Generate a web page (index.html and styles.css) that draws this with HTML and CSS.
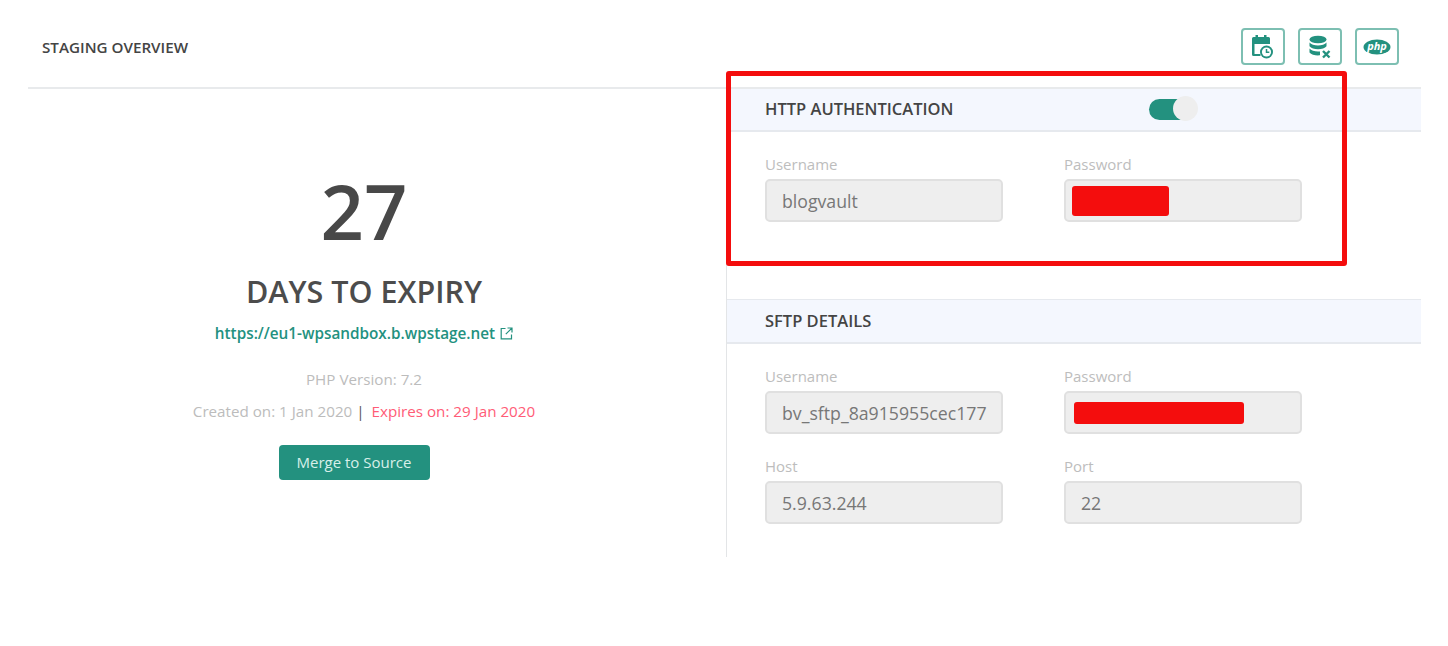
FILE: index.html
```html
<!DOCTYPE html>
<html lang="en">
<head>
  <meta charset="UTF-8" />
  <meta name="viewport" content="width=device-width, initial-scale=1.0"/>
  <title>Staging Overview</title>
  <link rel="stylesheet" href="styles.css">
</head>
<body>

  <div class="page">
    <div class="top-bar">
      <div class="page-title">STAGING OVERVIEW</div>
      <div class="icon-btns">
        <a class="icon-btn">
          <svg width="24" height="26" viewBox="0 0 24 26">
            <path fill="#23917f" d="M4.500 1h2.500v3H4.500zM13 1h2.500v3H13z"/>
            <path fill="#23917f" d="M2.500 3h15a1.500 1.500 0 0 1 1.500 1.500V10H3.500v10h6v2H2.500A1.500 1.500 0 0 1 1 20.500v-16A1.500 1.500 0 0 1 2.500 3z"/>
            <circle cx="15.500" cy="18" r="6.500" fill="#23917f"/>
            <circle cx="15.500" cy="18" r="4.600" fill="#fff"/>
            <path d="M15.500 15v3.300h2.800" fill="none" stroke="#23917f" stroke-width="1.500"/>
          </svg>
        </a>
        <a class="icon-btn">
          <svg width="24" height="24" viewBox="0 0 24 24">
            <ellipse cx="10" cy="4.500" rx="8.500" ry="3.800" fill="#23917f"/>
            <path fill="#23917f" d="M1.500 7.500c1.500 2 5 3 8.500 3s7-1 8.500-3v3.800c-1.500 2-5 3-8.500 3s-7-1-8.500-3zM1.500 13.500c1.500 2 5 3 8.500 3 .7 0 1.400 0 2-.1v3.900c-.6.1-1.300.1-2 .1-3.500 0-7-1-8.500-3z"/>
            <path d="M15 16l6.500 6.500M21.500 16L15 22.500" stroke="#23917f" stroke-width="2.400" fill="none"/>
          </svg>
        </a>
        <a class="icon-btn">
          <svg width="28" height="16" viewBox="0 0 28 16">
            <ellipse cx="14" cy="8" rx="13.500" ry="7.500" fill="#23917f"/>
            <text x="14" y="11" text-anchor="middle" class="php-text">php</text>
          </svg>
        </a>
      </div>
    </div>

    <div class="columns">
      <div class="left-col">
        <div class="days">27</div>
        <div class="days-label">DAYS TO EXPIRY</div>
        <a class="site-link">
          https://eu1-wpsandbox.b.wpstage.net
          <svg width="13" height="13" viewBox="0 0 13 13">
            <path d="M5.500 1.500H1.200v10.300h10.300V7.500M7.500 1H12v4.500M12 1L5.800 7.200" fill="none" stroke="#23917f" stroke-width="1.200"/>
          </svg>
        </a>
        <p class="meta php-version">PHP Version: 7.2</p>
        <p class="meta dates">Created on: 1 Jan 2020 <span class="sep">|</span> <span class="expires">Expires on: 29 Jan 2020</span></p>
        <button class="merge-btn">Merge to Source</button>
      </div>

      <div class="right-col">
        <div class="section http-section">
          <div class="section-head">
            <h4>HTTP AUTHENTICATION</h4>
            <div class="toggle"><span class="thumb"></span></div>
          </div>
          <div class="fields">
            <div class="field">
              <label>Username</label>
              <div class="input">blogvault</div>
            </div>
            <div class="field">
              <label>Password</label>
              <div class="input redacted"><span class="red-mark short"></span></div>
            </div>
          </div>
        </div>

        <div class="section sftp-section">
          <div class="section-head">
            <h4>SFTP DETAILS</h4>
          </div>
          <div class="fields">
            <div class="field">
              <label>Username</label>
              <div class="input">bv_sftp_8a915955cec177</div>
            </div>
            <div class="field">
              <label>Password</label>
              <div class="input redacted"><span class="red-mark long"></span></div>
            </div>
            <div class="field">
              <label>Host</label>
              <div class="input">5.9.63.244</div>
            </div>
            <div class="field">
              <label>Port</label>
              <div class="input">22</div>
            </div>
          </div>
        </div>
      </div>
    </div>

    <div class="highlight-box"></div>
  </div>

</body>
</html>
```

FILE: styles.css
```css
* {
  margin: 0;
  box-sizing: border-box;
}

body {
  font-family: 'Open Sans', sans-serif;
  background-color: #fff;
  color: #4a4a4a;
  height: 100vh;
  overflow: hidden;
}

.page {
  position: relative;
  margin-left: 28px;
  width: 1393px;
}

/* header */
.top-bar {
  display: flex;
  justify-content: space-between;
  align-items: center;
  height: 89px;
  padding: 16px 22px 10px 14px;
  border-bottom: 2px solid #e8eaec;
}

.page-title {
  font-size: 15.2px;
  font-weight: 600;
  color: #444;
}

.icon-btns {
  display: flex;
  gap: 13px;
}

.icon-btn {
  display: flex;
  justify-content: center;
  align-items: center;
  width: 44px;
  height: 37px;
  border: 2px solid #7dbfb2;
  border-radius: 4px;
}

.php-text {
  font-family: 'Open Sans', sans-serif;
  font-size: 11px;
  font-style: italic;
  font-weight: 700;
  fill: #fff;
}

.columns {
  display: flex;
}

/* left side */
.left-col {
  width: 698px;
  padding: 77px 26px 0 0;
  display: flex;
  flex-direction: column;
  align-items: center;
}

.days {
  font-size: 76px;
  font-weight: 600;
  line-height: 90px;
  color: #484848;
}

.days-label {
  margin-top: 15px;
  font-size: 30.5px;
  font-weight: 600;
  line-height: 40px;
  color: #4c4c4c;
}

.site-link {
  display: flex;
  align-items: center;
  gap: 5px;
  margin-top: 11px;
  font-size: 15.3px;
  font-weight: 600;
  line-height: 22px;
  color: #23917f;
}

.meta {
  font-size: 15.2px;
  line-height: 22px;
  color: #bcbcbc;
}

.php-version {
  margin-top: 24px;
}

.dates {
  margin-top: 10px;
}

.sep {
  color: #555;
}

.expires {
  margin-left: 3px;
  color: #ff5c77;
}

.merge-btn {
  width: 151px;
  height: 35px;
  margin: 23px 20px 0 0;
  padding-bottom: 3px;
  border: none;
  border-radius: 4px;
  background: #23917f;
  color: #d8efe9;
  font-family: inherit;
  font-size: 15px;
}

/* right side */
.right-col {
  flex: 1;
  height: 468px;
  border-left: 1px solid #e3e5e7;
}

.section-head {
  display: flex;
  align-items: center;
  height: 43px;
  padding-left: 38px;
  background: #f4f7fe;
  border-bottom: 2px solid #e6e9ee;
}

.sftp-section .section-head {
  height: 45px;
  border-top: 1px solid #e6e9ee;
}

.section-head h4 {
  padding-bottom: 2px;
  font-size: 16.5px;
  font-weight: 600;
  color: #444;
}

.http-section {
  height: 210px;
}

.toggle {
  position: relative;
  width: 41px;
  height: 21px;
  margin-left: 196px;
  border-radius: 11px;
  background: #23917f;
}

.thumb {
  position: absolute;
  top: -3px;
  left: 24px;
  width: 25px;
  height: 25px;
  border-radius: 50%;
  background: #eeeeee;
}

.fields {
  display: grid;
  grid-template-columns: 238px 238px;
  column-gap: 61px;
  row-gap: 22px;
  padding: 22px 0 0 38px;
}

label {
  display: block;
  font-size: 15px;
  line-height: 20px;
  color: #bdbdbd;
  margin-bottom: 5px;
}

.input {
  display: flex;
  align-items: center;
  height: 43px;
  padding-left: 15px;
  background: #eeeeee;
  border: 2px solid #e0e0e0;
  border-radius: 5px;
  font-size: 17.7px;
  color: #777;
}

.input.redacted {
  padding-left: 6px;
}

.red-mark {
  display: block;
  height: 30px;
  border-radius: 3px;
  background: #f40d0d;
}

.red-mark.short {
  width: 97px;
}

.red-mark.long {
  width: 170px;
  height: 22px;
  margin-left: 2px;
}

/* red annotation drawn over the screenshot */
.highlight-box {
  position: absolute;
  left: 698px;
  top: 71px;
  width: 621px;
  height: 195px;
  border: 5px solid #f40d0d;
  border-radius: 3px;
}
```
